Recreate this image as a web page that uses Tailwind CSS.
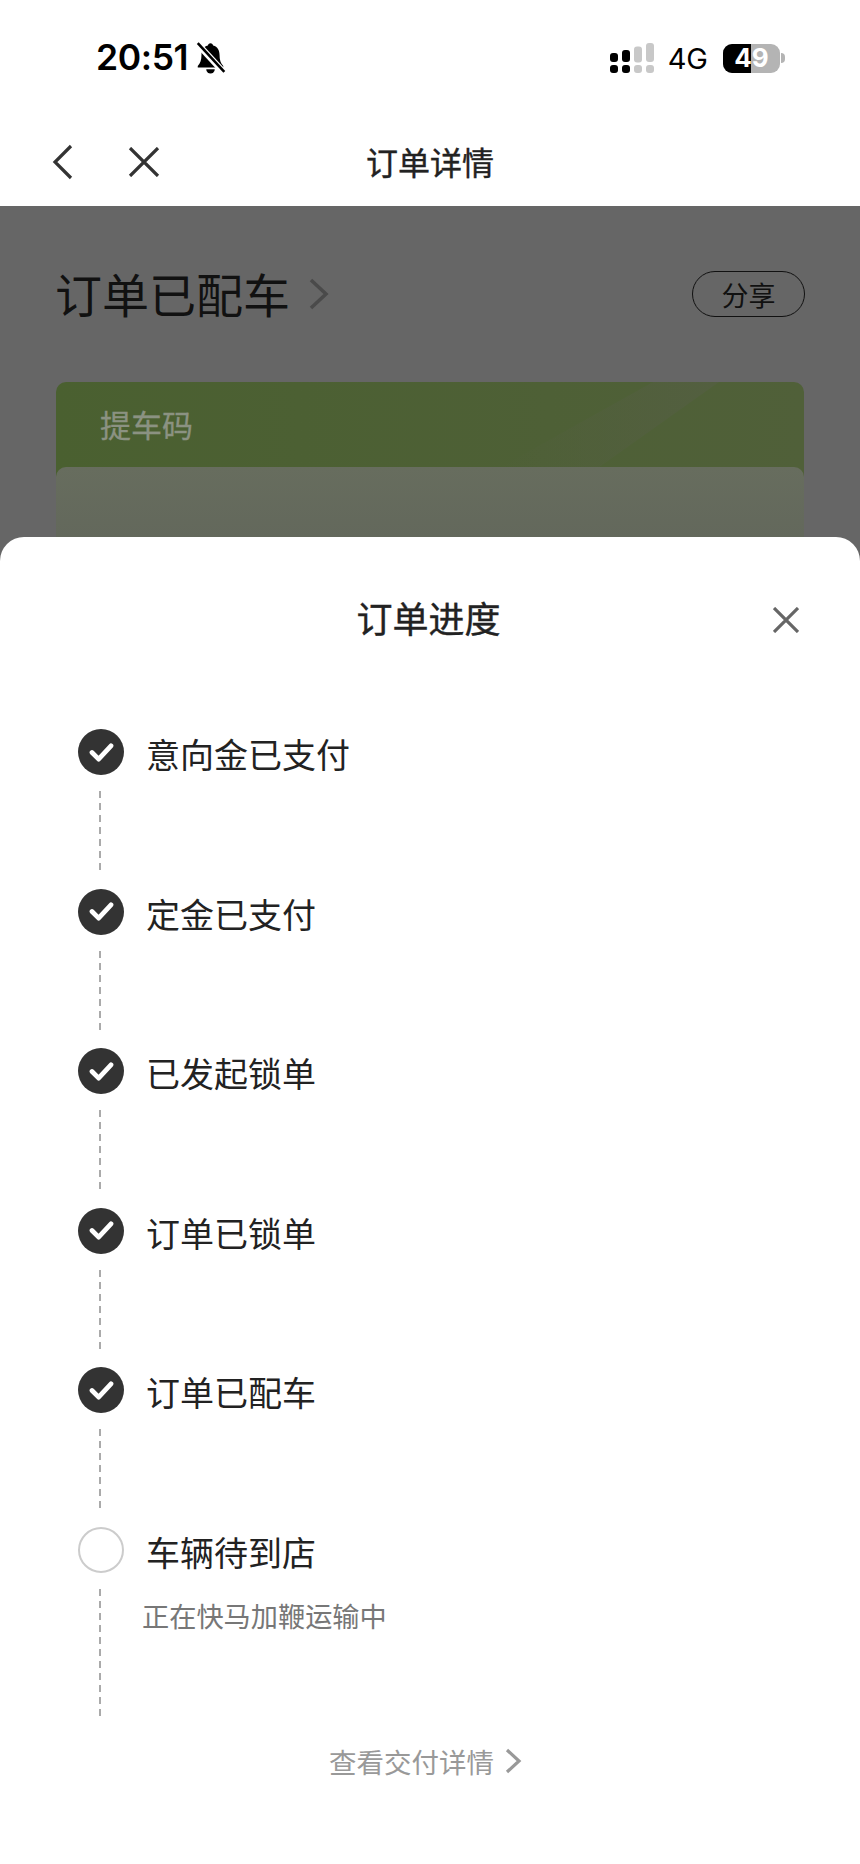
<!DOCTYPE html>
<html lang="zh-CN">
<head>
  <meta charset="UTF-8" />
  <meta name="viewport" content="width=device-width, initial-scale=1.0" />
  <title>订单详情</title>
  <script src="https://cdn.jsdelivr.net/npm/@tailwindcss/browser@4"></script>
</head>
<body class="font-['Noto_Sans_CJK_SC','Noto_Sans',sans-serif] bg-white text-[#222]">
  <div class="relative w-[860px] h-[1864px] overflow-hidden flex flex-col">
    <!-- Status bar -->
    <div class="h-[116px] shrink-0 flex items-start justify-between pt-[38px] pl-[96px] pr-[75px]">
      <div class="flex items-center h-[40px] gap-[6px]">
        <span class="font-['Inter',sans-serif] font-semibold text-[35.5px] leading-none text-black tracking-[-0.4px]">20:51</span>
        <svg class="w-[33px] h-[34px]" viewBox="0 0 30 32">
          <path d="M15 2c-1.400 0-2.300.9-2.500 2.200C8.300 5.300 6.500 8.800 6.500 13c0 5-1 8-3.500 10.500V25h24v-1.500C24.500 21 23.500 18 23.500 13c0-4.200-1.800-7.700-6-8.800C17.300 2.900 16.400 2 15 2z" fill="#000"/>
          <path d="M11 26.500a4 4 0 0 0 8 0z" fill="#000"/>
          <path d="M3 3l25 27" stroke="#fff" stroke-width="6"/>
          <path d="M3 2l25 27" stroke="#000" stroke-width="2.400"/>
        </svg>
      </div>
      <div class="flex items-center h-[30px] mt-[5px]">
        <svg class="w-[44px] h-[30px]" viewBox="0 0 44 30">
          <rect x="0" y="10" width="8" height="9" rx="3" fill="#000"/>
          <rect x="12" y="7" width="8" height="12" rx="3" fill="#000"/>
          <rect x="24" y="3.500" width="8" height="16" rx="3" fill="#c8c8c8"/>
          <rect x="36" y="0" width="8" height="19" rx="3" fill="#c8c8c8"/>
          <rect x="0" y="22" width="8" height="8" rx="3" fill="#000"/>
          <rect x="12" y="22" width="8" height="8" rx="3" fill="#000"/>
          <rect x="24" y="22" width="8" height="8" rx="3" fill="#c8c8c8"/>
          <rect x="36" y="22" width="8" height="8" rx="3" fill="#c8c8c8"/>
        </svg>
        <span class="ml-[14px] font-['Inter',sans-serif] text-[29px] leading-none text-black">4G</span>
        <div class="ml-[15px] relative w-[57px] h-[29px] rounded-[9px] flex bg-[#b4b4b4]">
          <div class="w-[28px] h-full rounded-l-[9px] bg-black"></div>
          <span class="absolute inset-0 flex items-center justify-center font-['Inter',sans-serif] font-bold text-[26px] leading-none text-white">49</span>
        </div>
        <div class="ml-[1px] w-[4px] h-[10px] rounded-r-full bg-[#b4b4b4]"></div>
      </div>
    </div>

    <!-- Nav bar -->
    <div class="relative h-[90px] shrink-0 flex items-center justify-center">
      <svg class="absolute left-[52px] top-[28px] w-[22px] h-[36px]" viewBox="0 0 22 36" fill="none" stroke="#333" stroke-width="3.200">
        <path d="M19 2 3 18l16 16"/>
      </svg>
      <svg class="absolute left-[128px] top-[31px] w-[32px] h-[30px]" viewBox="0 0 32 30" fill="none" stroke="#333" stroke-width="3.200">
        <path d="M2 1l28 28M30 1 2 29"/>
      </svg>
      <h1 class="text-[32px] leading-none font-normal text-[#222] [-webkit-text-stroke:0.4px_#222]">订单详情</h1>
    </div>

    <!-- Page behind the sheet -->
    <div class="flex-1 bg-[#666666] pl-[55px] pr-[55px] pt-[65px]">
      <div class="flex items-center justify-between">
        <div class="flex items-center">
          <span class="text-[47px] leading-[46px] text-[#111] mt-[-3px]">订单已配车</span>
          <svg class="ml-[19px] w-[20px] h-[32px]" viewBox="0 0 20 32" fill="none" stroke="#4a4a4a" stroke-width="3.500">
            <path d="M2 2l15 14L2 30"/>
          </svg>
        </div>
        <div class="w-[113px] h-[46px] rounded-full border-[1.5px] border-[#111] flex items-center justify-center text-[27px] leading-none text-[#111]">分享</div>
      </div>
      <div class="relative mt-[65px] ml-[1px] mr-[1px] h-[240px] rounded-[10px] overflow-hidden bg-gradient-to-r from-[#4a6030] to-[#506039]">
        <div class="absolute top-0 right-[85px] w-[220px] h-[86px] bg-gradient-to-r from-transparent to-[#535f40] [clip-path:polygon(70%_0,100%_0,45%_100%,0_100%)]"></div>
        <div class="relative pl-[44px] pt-[24px] text-[31px] leading-[36px] text-[#8b9282] [-webkit-text-stroke:0.3px_#8b9282]">提车码</div>
        <div class="absolute left-0 right-0 top-[85px] h-[140px] rounded-t-[10px] bg-gradient-to-b from-[#676d5e] to-[#5f6359]"></div>
      </div>
    </div>

    <!-- Order progress sheet -->
    <div class="absolute left-0 right-0 top-[537px] bottom-0 bg-white rounded-t-[24px]">
      <div class="relative h-[192px] flex items-start justify-center pt-[60px]">
        <h2 class="text-[36px] leading-[40px] font-normal text-[#222] ml-[-3px] [-webkit-text-stroke:0.4px_#222]">订单进度</h2>
        <svg class="absolute left-[773px] top-[70px] w-[26px] h-[26px]" viewBox="0 0 26 26" fill="none" stroke="#666" stroke-width="3.200">
          <path d="M1 1l24 24M25 1 1 25"/>
        </svg>
      </div>

      <div class="pl-[78px]">
        <div class="h-[159.5px] flex flex-col">
          <div class="flex items-center h-[46px]">
            <div class="w-[46px] h-[46px] rounded-full bg-[#333] flex items-center justify-center">
              <svg class="w-[25px] h-[19px]" viewBox="0 0 26 20" fill="none" stroke="#fff" stroke-width="5" stroke-linecap="round" stroke-linejoin="round"><path d="M3 10l7 7L23 3"/></svg>
            </div>
            <span class="ml-[22px] text-[34px] leading-none mt-[4px]">意向金已支付</span>
          </div>
          <div class="ml-[21px] mt-[16px] w-[2px] h-[84px] bg-[repeating-linear-gradient(to_bottom,#aaa_0,#aaa_7px,transparent_7px,transparent_12px)]"></div>
        </div>
        <div class="h-[159.5px] flex flex-col">
          <div class="flex items-center h-[46px]">
            <div class="w-[46px] h-[46px] rounded-full bg-[#333] flex items-center justify-center">
              <svg class="w-[25px] h-[19px]" viewBox="0 0 26 20" fill="none" stroke="#fff" stroke-width="5" stroke-linecap="round" stroke-linejoin="round"><path d="M3 10l7 7L23 3"/></svg>
            </div>
            <span class="ml-[22px] text-[34px] leading-none mt-[4px]">定金已支付</span>
          </div>
          <div class="ml-[21px] mt-[16px] w-[2px] h-[84px] bg-[repeating-linear-gradient(to_bottom,#aaa_0,#aaa_7px,transparent_7px,transparent_12px)]"></div>
        </div>
        <div class="h-[159.5px] flex flex-col">
          <div class="flex items-center h-[46px]">
            <div class="w-[46px] h-[46px] rounded-full bg-[#333] flex items-center justify-center">
              <svg class="w-[25px] h-[19px]" viewBox="0 0 26 20" fill="none" stroke="#fff" stroke-width="5" stroke-linecap="round" stroke-linejoin="round"><path d="M3 10l7 7L23 3"/></svg>
            </div>
            <span class="ml-[22px] text-[34px] leading-none mt-[4px]">已发起锁单</span>
          </div>
          <div class="ml-[21px] mt-[16px] w-[2px] h-[84px] bg-[repeating-linear-gradient(to_bottom,#aaa_0,#aaa_7px,transparent_7px,transparent_12px)]"></div>
        </div>
        <div class="h-[159.5px] flex flex-col">
          <div class="flex items-center h-[46px]">
            <div class="w-[46px] h-[46px] rounded-full bg-[#333] flex items-center justify-center">
              <svg class="w-[25px] h-[19px]" viewBox="0 0 26 20" fill="none" stroke="#fff" stroke-width="5" stroke-linecap="round" stroke-linejoin="round"><path d="M3 10l7 7L23 3"/></svg>
            </div>
            <span class="ml-[22px] text-[34px] leading-none mt-[4px]">订单已锁单</span>
          </div>
          <div class="ml-[21px] mt-[16px] w-[2px] h-[84px] bg-[repeating-linear-gradient(to_bottom,#aaa_0,#aaa_7px,transparent_7px,transparent_12px)]"></div>
        </div>
        <div class="h-[159.5px] flex flex-col">
          <div class="flex items-center h-[46px]">
            <div class="w-[46px] h-[46px] rounded-full bg-[#333] flex items-center justify-center">
              <svg class="w-[25px] h-[19px]" viewBox="0 0 26 20" fill="none" stroke="#fff" stroke-width="5" stroke-linecap="round" stroke-linejoin="round"><path d="M3 10l7 7L23 3"/></svg>
            </div>
            <span class="ml-[22px] text-[34px] leading-none mt-[4px]">订单已配车</span>
          </div>
          <div class="ml-[21px] mt-[16px] w-[2px] h-[84px] bg-[repeating-linear-gradient(to_bottom,#aaa_0,#aaa_7px,transparent_7px,transparent_12px)]"></div>
        </div>
        <!-- Pending step -->
        <div class="flex flex-col">
          <div class="flex items-center h-[46px]">
            <div class="w-[46px] h-[46px] rounded-full border-[2.5px] border-[#cccccc]"></div>
            <span class="ml-[22px] text-[34px] leading-none mt-[4px]">车辆待到店</span>
          </div>
          <div class="flex">
            <div class="ml-[21px] mt-[16px] w-[2px] h-[132px] bg-[repeating-linear-gradient(to_bottom,#aaa_0,#aaa_7px,transparent_7px,transparent_12px)]"></div>
            <p class="ml-[41px] mt-[26px] text-[27.2px] leading-[32px] text-[#777]">正在快马加鞭运输中</p>
          </div>
        </div>
      </div>

      <div class="mt-[24px] pr-[9px] flex items-center justify-center">
        <span class="text-[27.5px] leading-[32px] text-[#999]">查看交付详情</span>
        <svg class="ml-[11px] w-[17px] h-[26px]" viewBox="0 0 17 26" fill="none" stroke="#999" stroke-width="3.200">
          <path d="M2 2l12 11L2 24"/>
        </svg>
      </div>
    </div>
  </div>
</body>
</html>
